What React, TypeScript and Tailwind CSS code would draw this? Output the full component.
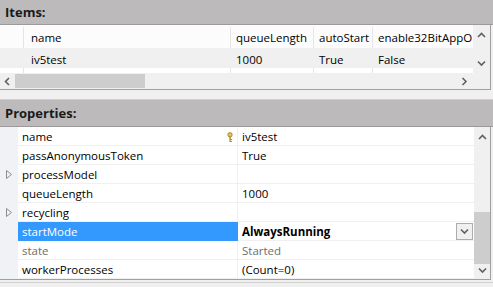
import React from "react";

const font = { fontFamily: '"Open Sans", "Noto Sans", Arial, sans-serif' };

function Chevron({ dir, className = "" }: { dir: "up" | "down" | "left" | "right"; className?: string }) {
  const pts = {
    up: "1,5 4.5,1.5 8,5",
    down: "1,1.5 4.5,5 8,1.5",
    left: "5,1 1.5,4.5 5,8",
    right: "1.5,1 5,4.5 1.5,8",
  }[dir];
  const vertical = dir === "up" || dir === "down";
  return (
    <svg
      width={vertical ? 9 : 7}
      height={vertical ? 7 : 9}
      viewBox={vertical ? "0 0 9 7" : "0 0 7 9"}
      className={className}
    >
      <polyline points={pts} fill="none" stroke="#606060" strokeWidth="1.6" />
    </svg>
  );
}

function Expander() {
  return (
    <svg width="6" height="9" viewBox="0 0 6 9">
      <polygon points="0.5,0.5 5.5,4.5 0.5,8.5" fill="none" stroke="#8c8c8c" strokeWidth="1" />
    </svg>
  );
}

function KeyIcon() {
  return (
    <svg width="6" height="11" viewBox="0 0 6 11">
      <circle cx="3" cy="2.8" r="2.2" fill="#e8c050" stroke="#a07820" strokeWidth="0.8" />
      <rect x="2.4" y="4.5" width="1.4" height="5.5" fill="#b08a30" />
      <rect x="3.6" y="7" width="1.6" height="1" fill="#b08a30" />
      <rect x="3.6" y="9" width="1.4" height="1" fill="#b08a30" />
    </svg>
  );
}

const props = [
  { name: "name", value: "iv5test", key: true },
  { name: "passAnonymousToken", value: "True" },
  { name: "processModel", value: "", expand: true },
  { name: "queueLength", value: "1000" },
  { name: "recycling", value: "", expand: true },
  { name: "startMode", value: "AlwaysRunning", selected: true },
  { name: "state", value: "Started", disabled: true },
  { name: "workerProcesses", value: "(Count=0)" },
];

export default function App() {
  return (
    <div className="w-[493px] h-[287px] bg-[#f0f0f0] flex flex-col overflow-hidden text-[11.5px] text-black" style={font}>
      {/* Items */}
      <div className="h-[25px] shrink-0 bg-[#bcbabb] border-b border-[#9c9a9b] flex items-center pl-[5px] pt-[1px] font-bold text-[13px] text-[#1a1a1a]">
        Items:
      </div>
      <div className="w-[491px] h-[65px] shrink-0 flex flex-col border-r border-b border-[#a0a0a0] bg-white">
        <div className="flex h-[48px]">
          <div className="w-[473px] flex flex-col">
            <div className="flex h-[24px] bg-[#fcfcfc] border-b border-[#f0f0f0] pt-[2px]">
              <div className="w-[24px] border-r border-[#e5e5e5]" />
              <div className="w-[207px] border-r border-[#e5e5e5] pl-[7px] flex items-center">name</div>
              <div className="w-[83px] border-r border-[#e5e5e5] pl-[5px] flex items-center">queueLength</div>
              <div className="w-[59px] border-r border-[#e5e5e5] pl-[5px] flex items-center">autoStart</div>
              <div className="w-[100px] pl-[5px] flex items-center whitespace-nowrap overflow-hidden">enable32BitAppO</div>
            </div>
            <div className="flex h-[19px] bg-[#f0f0f0] pt-[2px]">
              <div className="w-[24px]" />
              <div className="w-[207px] pl-[7px] flex items-center">iv5test</div>
              <div className="w-[83px] pl-[5px] flex items-center">1000</div>
              <div className="w-[59px] pl-[5px] flex items-center">True</div>
              <div className="flex-1 pl-[5px] flex items-center">False</div>
            </div>
            <div className="flex flex-1">
              <div className="w-[24px] border-r border-[#e5e5e5]" />
              <div className="w-[207px] border-r border-[#e5e5e5]" />
              <div className="w-[83px] border-r border-[#e5e5e5]" />
              <div className="w-[59px] border-r border-[#e5e5e5]" />
              <div className="flex-1" />
            </div>
          </div>
          <div className="w-[17px] bg-[#f0f0f0] flex flex-col items-center justify-between pt-[7px] pb-[6px]">
            <Chevron dir="up" />
            <Chevron dir="down" />
          </div>
        </div>
        <div className="flex h-[16px] bg-[#f0f0f0] items-stretch">
          <div className="w-[15px] flex items-center justify-center">
            <Chevron dir="left" />
          </div>
          <div className="w-[130px] bg-[#cdcdcd] my-[1px]" />
          <div className="flex-1" />
          <div className="w-[17px] flex items-center justify-center">
            <Chevron dir="right" />
          </div>
          <div className="w-[17px]" />
        </div>
      </div>
      <div className="h-[10px] shrink-0 border-b border-[#d0d0d0]" />

      {/* Properties */}
      <div className="h-[27px] shrink-0 bg-[#bcbabb] border-b border-[#9c9a9b] flex items-center pl-[5px] pt-[2px] font-bold text-[13px] text-[#1a1a1a]">
        Properties:
      </div>
      <div className="w-[491px] h-[153px] shrink-0 flex border-r border-b border-[#a0a0a0] bg-white">
        <div className="w-[474px] flex flex-col">
          {props.map((p) => (
            <div key={p.name} className="flex h-[19px]">
              <div className="w-[18px] bg-[#f0f2f6] flex items-center pl-[6px]">
                {p.expand && <Expander />}
              </div>
              <div
                className={`w-[220px] flex items-center pl-[4px] pr-[4px] pt-[2px] border-r border-b ${
                  p.selected
                    ? "bg-[#3399ff] text-white border-[#3399ff]"
                    : "border-[#f0f0f0]"
                } ${p.disabled ? "text-[#6d6d6d]" : ""}`}
              >
                <span className="flex-1">{p.name}</span>
                {p.key && <KeyIcon />}
              </div>
              <div
                className={`flex-1 flex items-center pl-[4px] border-b border-[#f0f0f0] ${
                  p.selected ? "font-bold" : "pt-[2px]"
                } ${p.disabled ? "text-[#6d6d6d]" : ""}`}
              >
                <span className={`flex-1 ${p.selected ? "pt-[2px]" : ""}`}>{p.value}</span>
                {p.selected && (
                  <div className="w-[17px] h-[17px] mr-[1px] border border-[#acacac] bg-[#f0f0f0] flex items-center justify-center">
                    <Chevron dir="down" />
                  </div>
                )}
              </div>
            </div>
          ))}
        </div>
        <div className="w-[16px] bg-[#f0f0f0] flex flex-col items-center pt-[7px] pb-[5px]">
          <Chevron dir="up" />
          <div className="flex-1" />
          <div className="w-[16px] h-[52px] bg-[#cdcdcd] mb-[3px]" />
          <Chevron dir="down" />
        </div>
      </div>
      <div className="h-[2px] shrink-0" />
      <div className="flex-1 border-t border-[#d0d0d0]" />
    </div>
  );
}
